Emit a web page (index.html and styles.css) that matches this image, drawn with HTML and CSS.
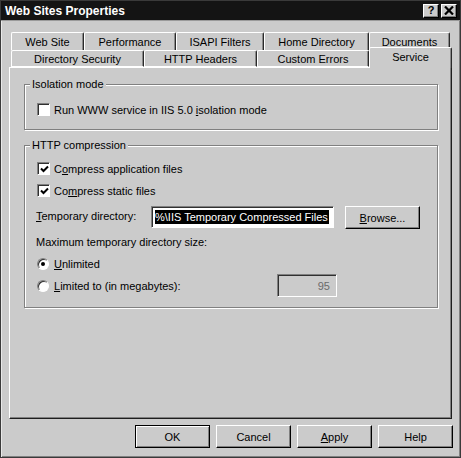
FILE: index.html
```html
<!DOCTYPE html>
<html>
<head>
<meta charset="utf-8">
<title>Web Sites Properties</title>
<link rel="stylesheet" href="styles.css">
</head>
<body>
<div class="window">
  <div class="titlebar">
    <span class="title">Web Sites Properties</span>
    <span class="tb-btns">
      <span class="tb-btn help">?</span>
      <span class="tb-btn close"><svg width="10" height="9" viewBox="0 0 10 9"><path d="M1 0.5 L9 8.5 M9 0.5 L1 8.5" stroke="#000" stroke-width="2.2"/></svg></span>
    </span>
  </div>

  <div class="tabs">
    <div class="tab-row row1">
      <div class="tab t-website">Web Site</div>
      <div class="tab t-perf">Performance</div>
      <div class="tab t-isapi">ISAPI Filters</div>
      <div class="tab t-home">Home Directory</div>
      <div class="tab t-docs">Documents</div>
    </div>
    <div class="tab-row row2">
      <div class="tab t-dirsec">Directory Security</div>
      <div class="tab t-http">HTTP Headers</div>
      <div class="tab t-custom">Custom Errors</div>
      <div class="tab t-service selected">Service</div>
    </div>
  </div>

  <div class="panel">
    <div class="group g-isolation">
      <span class="group-title">Isolation mode</span>
      <div class="row check-row first">
        <span class="checkbox"></span>
        <span class="label">Run WWW service in IIS 5.0 <u>i</u>solation mode</span>
      </div>
    </div>

    <div class="group g-http">
      <span class="group-title">HTTP compression</span>
      <div class="row check-row first">
        <span class="checkbox checked"><svg width="9" height="9" viewBox="0 0 9 9"><path d="M1 3.5 L3.5 6 L8 1.5" fill="none" stroke="#000" stroke-width="2"/></svg></span>
        <span class="label">C<u>o</u>mpress application files</span>
      </div>
      <div class="row check-row">
        <span class="checkbox checked"><svg width="9" height="9" viewBox="0 0 9 9"><path d="M1 3.5 L3.5 6 L8 1.5" fill="none" stroke="#000" stroke-width="2"/></svg></span>
        <span class="label">Co<u>m</u>press static files</span>
      </div>
      <div class="row dir-row">
        <span class="dir-label"><u>T</u>emporary directory:</span>
        <span class="textbox dir-input"><span class="sel">%\IIS Temporary Compressed Files</span></span>
        <span class="btn browse"><u>B</u>rowse...</span>
      </div>
      <div class="row text-row">Maximum temporary directory size:</div>
      <div class="row radio-row">
        <span class="radio on"></span>
        <span class="label"><u>U</u>nlimited</span>
      </div>
      <div class="row radio-row limited">
        <span class="radio"></span>
        <span class="label"><u>L</u>imited to (in megabytes):</span>
        <span class="textbox num-input disabled">95</span>
      </div>
    </div>
  </div>

  <div class="buttons">
    <span class="btn default">OK</span>
    <span class="btn">Cancel</span>
    <span class="btn"><u>A</u>pply</span>
    <span class="btn">Help</span>
  </div>
</div>
</body>
</html>
```

FILE: styles.css
```css
* { box-sizing: border-box; }
html, body { margin: 0; padding: 0; background: #cbcbcb; }
body {
  font-family: "Liberation Sans", Arial, sans-serif;
  font-size: 11px;
  color: #000;
}
u { text-decoration: underline; text-underline-offset: 1px; }

.window {
  width: 461px;
  height: 458px;
  background: #cbcbcb;
  border: 1px solid #3a3a3a;
  box-shadow: inset 1px 1px 0 #e8e8e8, inset -1px -1px 0 #808080;
  display: flex;
  flex-direction: column;
}

.titlebar {
  height: 20px;
  background: #141414;
  display: flex;
  align-items: center;
  justify-content: space-between;
  padding: 0 3px 0 4px;
  border-bottom: 1px solid #9a9a9a;
}
.title {
  color: #fff;
  font-weight: bold;
  font-size: 12px;
}
.tb-btns { display: flex; gap: 2px; }
.tb-btn {
  width: 16px;
  height: 14px;
  background: #cbcbcb;
  border-top: 1px solid #fff;
  border-left: 1px solid #fff;
  border-right: 1px solid #000;
  border-bottom: 1px solid #000;
  box-shadow: inset -1px -1px 0 #808080;
  display: flex;
  align-items: center;
  justify-content: center;
  font-weight: bold;
  font-size: 11px;
  line-height: 1;
}

.tabs {
  margin-top: 11px;
  padding-left: 10px;
}
.tab-row { display: flex; }
.row1 { height: 18px; }
.row2 { height: 17px; align-items: flex-end; }
.tab {
  display: flex;
  align-items: center;
  justify-content: center;
  background: #cbcbcb;
  border-top: 1px solid #fff;
  border-left: 1px solid #fff;
  border-right: 1px solid #2a2a2a;
  box-shadow: inset -1px 0 0 #8a8a8a;
  border-radius: 2px 2px 0 0;
  height: 100%;
  padding-top: 1px;
}
.row2 .tab { border-bottom: 1px solid #fff; }
.t-website { width: 73px; }
.t-perf { width: 92px; }
.t-isapi { width: 88px; }
.t-home { width: 105px; }
.t-docs { width: 81px; }
.t-dirsec { width: 133px; }
.t-http { width: 113px; }
.t-custom { width: 112px; }
.tab.selected {
  width: 83px;
  height: 21px;
  margin-bottom: -1px;
  border-bottom: none;
  align-items: flex-start;
  padding-top: 3px;
  position: relative;
  z-index: 1;
}

.panel {
  margin-left: 8px;
  width: 443px;
  height: 352px;
  border-top: 1px solid #fff;
  border-left: 1px solid #fff;
  border-right: 1px solid #1e1e1e;
  border-bottom: 1px solid #1e1e1e;
  box-shadow: inset -1px -1px 0 #808080;
  padding-top: 16px;
}

.group {
  margin-left: 14px;
  width: 414px;
  border: 1px solid #808080;
  box-shadow: inset 1px 1px 0 #fff, 1px 1px 0 #fff;
  padding: 0 12px 0 12px;
  display: flex;
  flex-direction: column;
}
.group-title {
  align-self: flex-start;
  margin: -7px 0 0 -7px;
  padding: 0 2px;
  line-height: 13px;
  height: 13px;
  background: #cbcbcb;
}
.g-isolation { padding-bottom: 13px; }
.g-http { margin-top: 15px; padding-bottom: 10px; }

.row { display: flex; align-items: center; }
.check-row { height: 13px; margin-top: 9px; }
.check-row.first { margin-top: 12px; }
.g-http .check-row.first { margin-top: 10px; }
.label { margin-left: 4px; white-space: nowrap; }

.checkbox {
  width: 13px;
  height: 13px;
  flex: none;
  background: #fff;
  border-top: 1px solid #808080;
  border-left: 1px solid #808080;
  border-right: 1px solid #fff;
  border-bottom: 1px solid #fff;
  box-shadow: inset 1px 1px 0 #303030;
  display: flex;
  align-items: center;
  justify-content: center;
  padding: 1px 0 0 1px;
}

.dir-row { margin-top: 9px; height: 23px; align-items: flex-start; }
.dir-label { width: 115px; margin-left: -1px; padding-top: 4px; flex: none; }
.textbox {
  background: #fff;
  border-top: 1px solid #808080;
  border-left: 1px solid #808080;
  border-right: 1px solid #fff;
  border-bottom: 1px solid #fff;
  box-shadow: inset 1px 1px 0 #303030;
  display: flex;
  align-items: center;
  white-space: nowrap;
  overflow: hidden;
}
.dir-input { width: 183px; height: 22px; padding: 0 2px 0 3px; }
.sel { background: #000; color: #fff; padding: 1px 1px 1px 0; }

.btn {
  width: 75px;
  height: 23px;
  background: #cbcbcb;
  border-top: 1px solid #fff;
  border-left: 1px solid #fff;
  border-right: 1px solid #000;
  border-bottom: 1px solid #000;
  box-shadow: inset -1px -1px 0 #808080;
  display: flex;
  align-items: center;
  justify-content: center;
  flex: none;
}
.browse { margin-left: 11px; }

.text-row { margin-top: 6px; height: 13px; margin-left: -1px; }
.radio-row { height: 13px; margin-top: 9px; }
.radio-row.limited { height: 23px; margin-top: 4px; }

.radio {
  width: 12px;
  height: 12px;
  flex: none;
  border-radius: 50%;
  background: #fff;
  border-top: 1px solid #808080;
  border-left: 1px solid #808080;
  border-right: 1px solid #fff;
  border-bottom: 1px solid #fff;
  box-shadow: inset 1px 1px 0 #303030;
  display: flex;
  align-items: center;
  justify-content: center;
  margin-left: 0;
}
.radio.on::after {
  content: "";
  width: 4px;
  height: 4px;
  border-radius: 50%;
  background: #000;
}
.radio-row .label { margin-left: 5px; }

.num-input {
  margin-left: auto;
  margin-right: 88px;
  width: 60px;
  height: 23px;
  justify-content: flex-end;
  padding-right: 6px;
  color: #6a6a6a;
}
.num-input.disabled { background: #cbcbcb; }

.buttons {
  display: flex;
  justify-content: flex-end;
  gap: 6px;
  margin-top: 6px;
  padding-right: 7px;
}
.btn.default {
  border: 1px solid #000;
  box-shadow: inset 1px 1px 0 #fff, inset -1px -1px 0 #808080;
}
```
